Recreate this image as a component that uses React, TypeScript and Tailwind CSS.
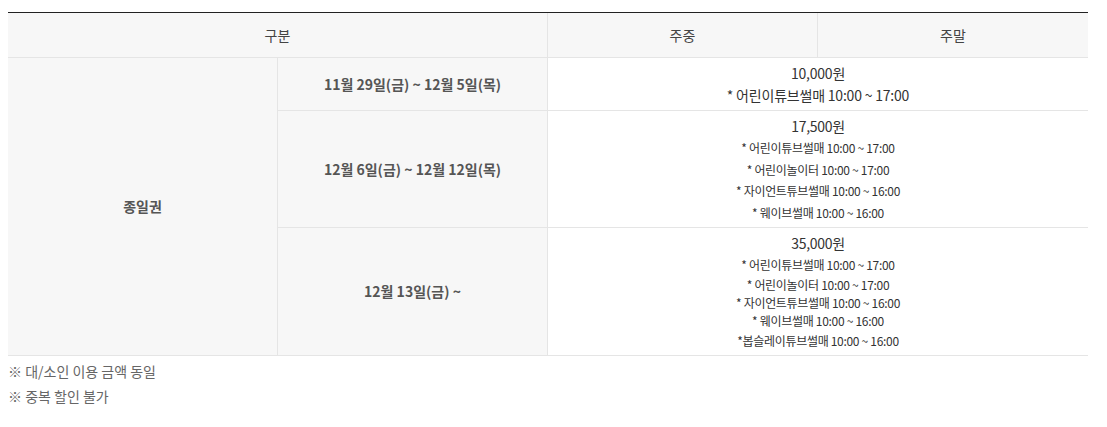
import React from "react";

const font = { fontFamily: '"Noto Sans CJK KR", "Noto Sans", sans-serif' };

export default function App() {
  return (
    <div className="bg-white w-[1107px] h-[427px] pt-[12px] pl-[8px] text-[#333]" style={font}>
      <div className="w-[1080px] border-t border-[#222] grid grid-cols-[269px_270px_270px_271px]">
        {/* header */}
        <div className="col-span-2 h-[45px] bg-[#f7f7f7] border-b border-[#e5e5e5] flex items-center justify-center text-[14px] text-[#444]">
          구분
        </div>
        <div className="h-[45px] bg-[#f7f7f7] border-b border-l border-[#e5e5e5] flex items-center justify-center text-[14px] text-[#444]">
          주중
        </div>
        <div className="h-[45px] bg-[#f7f7f7] border-b border-l border-[#e5e5e5] flex items-center justify-center text-[14px] text-[#444]">
          주말
        </div>

        {/* left rowspan */}
        <div className="row-span-3 bg-[#f7f7f7] border-b border-[#e5e5e5] flex items-center justify-center text-[14px] font-bold text-[#555]">
          종일권
        </div>

        {/* row 1 */}
        <div className="h-[53px] bg-[#f7f7f7] border-b border-l border-[#e5e5e5] flex items-center justify-center text-[14px] font-bold text-[#555]">
          11월 29일(금) ~ 12월 5일(목)
        </div>
        <div className="col-span-2 h-[53px] bg-white border-b border-l border-[#e5e5e5] flex flex-col items-center justify-center text-[14px] leading-[22px] tracking-[-0.2px]">
          <div>10,000원</div>
          <div>* 어린이튜브썰매 10:00 ~ 17:00</div>
        </div>

        {/* row 2 */}
        <div className="h-[117px] bg-[#f7f7f7] border-b border-l border-[#e5e5e5] flex items-center justify-center text-[14px] font-bold text-[#555]">
          12월 6일(금) ~ 12월 12일(목)
        </div>
        <div className="col-span-2 h-[117px] bg-white border-b border-l border-[#e5e5e5] flex flex-col items-center justify-center tracking-[-0.3px]">
          <div className="text-[14px] leading-[22px]">17,500원</div>
          <div className="text-[12px] leading-[21.5px]">* 어린이튜브썰매 10:00 ~ 17:00</div>
          <div className="text-[12px] leading-[21.5px]">* 어린이놀이터 10:00 ~ 17:00</div>
          <div className="text-[12px] leading-[21.5px]">* 자이언트튜브썰매 10:00 ~ 16:00</div>
          <div className="text-[12px] leading-[21.5px]">* 웨이브썰매 10:00 ~ 16:00</div>
        </div>

        {/* row 3 */}
        <div className="h-[128px] bg-[#f7f7f7] border-b border-l border-[#e5e5e5] flex items-center justify-center text-[14px] font-bold text-[#555]">
          12월 13일(금) ~
        </div>
        <div className="col-span-2 h-[128px] bg-white border-b border-l border-[#e5e5e5] flex flex-col items-center justify-center tracking-[-0.3px]">
          <div className="text-[14px] leading-[22px]">35,000원</div>
          <div className="text-[12px] leading-[22px]">* 어린이튜브썰매 10:00 ~ 17:00</div>
          <div className="text-[12px] leading-[18px]">* 어린이놀이터 10:00 ~ 17:00</div>
          <div className="text-[12px] leading-[18px]">* 자이언트튜브썰매 10:00 ~ 16:00</div>
          <div className="text-[12px] leading-[18px]">* 웨이브썰매 10:00 ~ 16:00</div>
          <div className="text-[12px] leading-[22px]">*봅슬레이튜브썰매 10:00 ~ 16:00</div>
        </div>
      </div>

      <div className="pt-[3px] text-[14px] text-[#666] leading-[25px]">
        <div>※ 대/소인 이용 금액 동일</div>
        <div>※ 중복 할인 불가</div>
      </div>
    </div>
  );
}
